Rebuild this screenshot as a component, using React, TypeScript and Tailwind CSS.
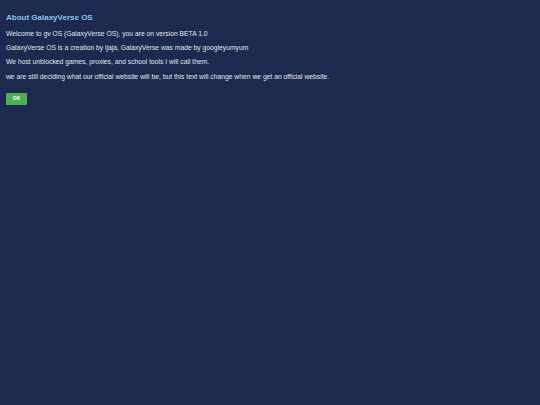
export default function App() {
  return (
    <div
      className="min-h-[405px] w-full bg-[#1b2a4e] px-[6px] pt-[12px] text-[#e3e6ee]"
      style={{ fontFamily: '"Liberation Sans", Arial, sans-serif' }}
    >
      <h2 className="text-[8px] font-bold leading-[12px] text-[#8cc4f5]">About GalaxyVerse OS</h2>
      <div className="mt-[5.5px] flex flex-col gap-[7.4px] text-[6.75px] leading-[7px]">
        <p>Welcome to gv OS (GalaxyVerse OS), you are on version BETA 1.0</p>
        <p>GalaxyVerse OS is a creation by ijaja, GalaxyVerse was made by googleyumyum</p>
        <p>We host unblocked games, proxies, and school tools I will call them.</p>
        <p>we are still deciding what our official website will be, but this text will change when we get an official website.</p>
      </div>
      <button
        type="button"
        className="mt-[13.3px] flex h-[12px] w-[21px] items-center justify-center rounded-[1px] bg-[#4caf50] text-[5px] font-bold text-white"
      >
        OK
      </button>
    </div>
  )
}
